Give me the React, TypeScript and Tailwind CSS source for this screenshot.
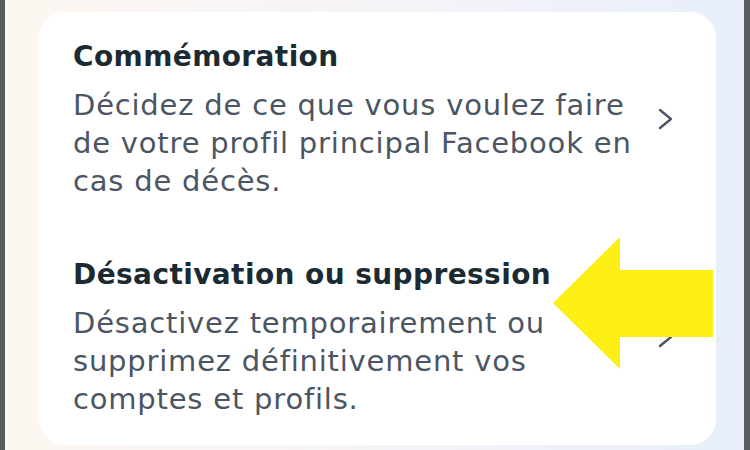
const items = [
  {
    title: 'Commémoration',
    lines: ['Décidez de ce que vous voulez faire', 'de votre profil principal Facebook en', 'cas de décès.'],
  },
  {
    title: 'Désactivation ou suppression',
    lines: ['Désactivez temporairement ou', 'supprimez définitivement vos', 'comptes et profils.'],
  },
];

function Chevron() {
  return (
    <svg width="16" height="22" viewBox="0 0 16 22" className="text-[#4b5563]">
      <polyline points="2,2 13,11 2,20" fill="none" stroke="currentColor" strokeWidth="2.4" strokeLinecap="round" strokeLinejoin="round" />
    </svg>
  );
}

export default function App() {
  return (
    <div className="flex h-[450px] w-[750px] overflow-hidden bg-[#585b5f]" style={{ fontFamily: '"DejaVu Sans", sans-serif' }}>
      <div className="relative ml-[5px] mr-[6px] flex flex-1 bg-gradient-to-r from-[#fdf7f1] via-[#f7f4f8] to-[#e7eefa] pl-[34px] pr-[28px] pt-[12px]">
        <div className="flex h-[433px] flex-1 flex-col gap-[56px] rounded-[26px] bg-white pl-[34px] pr-[42px] pt-[26px]">
          {items.map((item) => (
            <div key={item.title} className="flex items-center justify-between">
              <div>
                <div className="mb-[10px] text-[28px] font-bold leading-[38px] tracking-[0.4px] text-[#1c2b33]">{item.title}</div>
                <div className="text-[29px] leading-[38px] tracking-[0.8px] text-[#4b5563]">
                  {item.lines.map((l) => (
                    <div key={l}>{l}</div>
                  ))}
                </div>
              </div>
              <Chevron />
            </div>
          ))}
        </div>
        <svg className="absolute left-[548px] top-[237px]" width="160" height="132" viewBox="0 0 160 132">
          <polygon points="0,66 67,0 67,33 160,33 160,100 67,100 67,132" fill="#fdee14" />
        </svg>
      </div>
    </div>
  );
}
